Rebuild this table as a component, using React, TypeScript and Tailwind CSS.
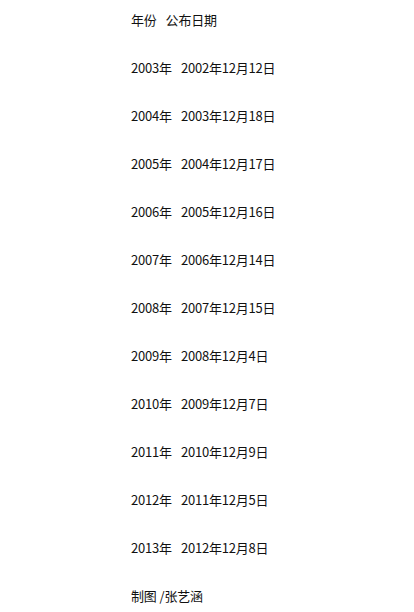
const rows = [
  ["2003年", "2002年12月12日"],
  ["2004年", "2003年12月18日"],
  ["2005年", "2004年12月17日"],
  ["2006年", "2005年12月16日"],
  ["2007年", "2006年12月14日"],
  ["2008年", "2007年12月15日"],
  ["2009年", "2008年12月4日"],
  ["2010年", "2009年12月7日"],
  ["2011年", "2010年12月9日"],
  ["2012年", "2011年12月5日"],
  ["2013年", "2012年12月8日"],
];

export default function App() {
  return (
    <div className="min-h-[612px] w-[414px] bg-white pl-[131px] pt-[11px] text-[13px] leading-[18px] text-[#111] tracking-[-0.2px] [font-family:'Noto_Sans_CJK_SC',sans-serif]">
      <div className="flex flex-col gap-[30px]">
        <p className="flex gap-[9px]">
          <span>年份</span>
          <span>公布日期</span>
        </p>
        {rows.map(([year, date]) => (
          <p key={year} className="flex gap-[9px]">
            <span>{year}</span>
            <span>{date}</span>
          </p>
        ))}
        <p className="flex gap-[3px]">
          <span>制图</span>
          <span>/张艺涵</span>
        </p>
      </div>
    </div>
  );
}
